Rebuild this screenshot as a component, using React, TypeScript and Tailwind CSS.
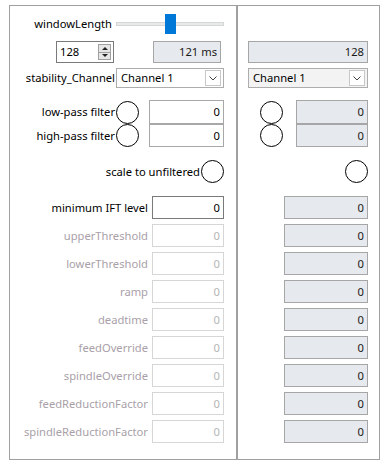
import React from 'react'

const font = { fontFamily: '"Noto Sans", "Open Sans", sans-serif' }

function Circle() {
  return <div className="h-[23px] w-[23px] shrink-0 rounded-full border border-black bg-white" />
}

function Box({ value, kind, className = '' }: { value: string; kind: 'active' | 'disabled' | 'readonly'; className?: string }) {
  const styles = {
    active: 'border-[#7a7a7a] bg-white text-black',
    disabled: 'border-[#d6d6d6] bg-white text-[#b4b4b4]',
    readonly: 'border-[#a6a6a6] bg-[#e6e9ed] text-[#1a1a1a]',
  }
  return (
    <div className={`flex shrink-0 items-center justify-end border pr-[3px] ${styles[kind]} ${className}`}>
      {value}
    </div>
  )
}

function Combo({ className = '' }: { className?: string }) {
  return (
    <div className={`flex h-[20px] shrink-0 items-center justify-between border border-[#adadad] pl-[4px] pr-[2px] ${className}`}>
      <span>Channel 1</span>
      <div className="flex h-[16px] w-[16px] items-center justify-center border border-[#c8c8c8] bg-white">
        <svg width="8" height="5" viewBox="0 0 8 5">
          <path d="M0.5 0.5 L4 4 L7.5 0.5" fill="none" stroke="#444" strokeWidth="1" />
        </svg>
      </div>
    </div>
  )
}

const lowerRows = [
  'upperThreshold',
  'lowerThreshold',
  'ramp',
  'deadtime',
  'feedOverride',
  'spindleOverride',
  'feedReductionFactor',
  'spindleReductionFactor',
]

export default function App() {
  return (
    <div className="min-h-[464px] w-[384px] bg-white pl-[9px] pt-[5px] text-[11.2px] leading-none" style={font}>
      <div className="flex h-[455px] w-[371px] border border-[#a0a0a0]">
        {/* left column */}
        <div className="flex w-[226px] flex-col pr-[12px]">
          <div className="mt-[8px] flex h-[20px] items-center">
            <span className="flex-1 pr-[4px] text-right">windowLength</span>
            <div className="relative flex h-[20px] w-[108px] items-center">
              <div className="h-[4px] w-full border border-[#d6d6d6] bg-[#e7eaea]" />
              <div className="absolute left-[49px] top-0 h-[20px] w-[11px] bg-[#0078d7]" />
            </div>
          </div>

          <div className="mt-[7px] flex h-[22px] items-center">
            <div className="ml-[46px] flex h-[22px] w-[58px] items-center justify-between border border-[#7a7a7a] pl-[3px] pr-[2px]">
              <span>128</span>
              <div className="flex h-[16px] w-[13px] flex-col border border-[#a0a0a0]">
                <div className="flex flex-1 items-center justify-center border-b border-[#a0a0a0] bg-[#e6e6e6]">
                  <svg width="6" height="3" viewBox="0 0 6 3"><path d="M0 3 L3 0 L6 3 Z" fill="#222" /></svg>
                </div>
                <div className="flex flex-1 items-center justify-center bg-[#e6e6e6]">
                  <svg width="6" height="3" viewBox="0 0 6 3"><path d="M0 0 L3 3 L6 0 Z" fill="#222" /></svg>
                </div>
              </div>
            </div>
            <Box value="121 ms" kind="readonly" className="ml-[39px] h-[22px] w-[68px]" />
          </div>

          <div className="mt-[5px] flex h-[20px] items-center">
            <span className="flex-1 pr-[1px] text-right">stability_Channel</span>
            <Combo className="w-[108px] bg-white" />
          </div>

          <div className="mt-[12px] flex h-[24px] items-center">
            <span className="flex-1 pr-[1px] text-right">low-pass filter</span>
            <Circle />
            <Box value="0" kind="active" className="ml-[10px] h-[24px] w-[75px] border-[#a8a8a8]" />
          </div>
          <div className="flex h-[23px] items-center">
            <span className="flex-1 pr-[1px] text-right">high-pass filter</span>
            <Circle />
            <Box value="0" kind="active" className="ml-[10px] h-[23px] w-[75px] border-[#a8a8a8]" />
          </div>

          <div className="mt-[13px] flex h-[23px] items-center">
            <span className="flex-1 pr-[1px] text-right">scale to unfiltered</span>
            <Circle />
          </div>

          <div className="mt-[13px] flex h-[23px] items-center">
            <span className="flex-1 pr-[4px] text-right">minimum IFT level</span>
            <Box value="0" kind="active" className="h-[23px] w-[72px]" />
          </div>
          {lowerRows.map((name) => (
            <div key={name} className="mt-[5px] flex h-[23px] items-center">
              <span className="flex-1 pr-[4px] text-right text-[#a99fa9]">{name}</span>
              <Box value="0" kind="disabled" className="h-[23px] w-[72px]" />
            </div>
          ))}
        </div>

        {/* divider */}
        <div className="w-[2px] bg-[#a0a0a0]" />

        {/* right column */}
        <div className="flex flex-1 flex-col items-end pr-[11px]">
          <div className="mt-[8px] h-[20px]" />
          <Box value="128" kind="readonly" className="mt-[7px] h-[22px] w-[120px]" />
          <Combo className="mt-[5px] w-[120px] bg-[#f3f3f3]" />

          <div className="mt-[12px] flex h-[24px] items-center">
            <Circle />
            <Box value="0" kind="readonly" className="ml-[13px] h-[24px] w-[72px]" />
          </div>
          <div className="flex h-[23px] items-center">
            <Circle />
            <Box value="0" kind="readonly" className="ml-[13px] h-[23px] w-[72px]" />
          </div>

          <div className="mt-[13px] flex h-[23px] items-center">
            <Circle />
          </div>

          <Box value="0" kind="readonly" className="mt-[13px] h-[23px] w-[84px]" />
          {lowerRows.map((name) => (
            <Box key={name} value="0" kind="readonly" className="mt-[5px] h-[23px] w-[84px]" />
          ))}
        </div>
      </div>
    </div>
  )
}
